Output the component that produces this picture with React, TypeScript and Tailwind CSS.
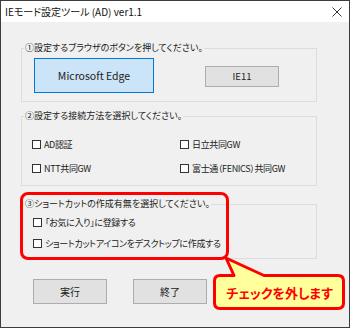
import React from "react";

const FONT = "font-['Noto_Sans_CJK_JP','Noto_Sans',sans-serif] [font-feature-settings:'palt']";

function Check({ label }: { label: string }) {
  return (
    <label className="flex h-[14px] items-center gap-[3px] text-[9px] tracking-[-0.35px] text-[#222]">
      <span className="h-[9px] w-[9px] shrink-0 border border-[#333] bg-white" />
      <span className="leading-none">{label}</span>
    </label>
  );
}

function Group({ title, className, children }: { title: string; className?: string; children: React.ReactNode }) {
  return (
    <fieldset className={`w-[296px] border border-[#dcdcdc] ${className ?? ""}`}>
      <legend className="ml-[2px] h-[14px] px-[1px] text-[9px] leading-[14px] text-[#222]">{title}</legend>
      {children}
    </fieldset>
  );
}

export default function App() {
  return (
    <div className={`relative flex h-[328px] w-[350px] flex-col border border-[#3c3c3c] bg-[#f0f0f0] ${FONT}`}>
      <div className="flex h-[21px] shrink-0 items-center justify-between bg-white pl-[4px] pr-[7px]">
        <span className="text-[10px] text-[#111]">IEモード設定ツール (AD) ver1.1</span>
        <svg width="10" height="10" viewBox="0 0 10 10">
          <path d="M0.5 0.5 L9.5 9.5 M9.5 0.5 L0.5 9.5" stroke="#333" strokeWidth="1" />
        </svg>
      </div>

      <div className="flex flex-col px-[20px] pt-[19px]">
        <Group title="①設定するブラウザのボタンを押してください。">
          <div className="flex h-[46px] items-start pl-[12px] pt-[3px]">
            <button className="flex h-[35px] w-[120px] items-center justify-center border border-[#0078d7] bg-[#cce4f7] text-[10.5px] text-[#222]">
              Microsoft Edge
            </button>
            <button className="ml-[51px] mt-[8px] flex h-[21px] w-[74px] items-center justify-center border border-[#adadad] bg-[#e1e1e1] text-[9.5px] text-[#222]">
              IE11
            </button>
          </div>
        </Group>

        <Group title="②設定する接続方法を選択してください。" className="mt-[7px]">
          <div className="grid grid-cols-[148px_1fr] gap-y-[10px] pb-[10px] pl-[10px] pt-[14px]">
            <Check label="AD認証" />
            <Check label="日立共同GW" />
            <Check label="NTT共同GW" />
            <Check label="富士通（FENICS）共同GW" />
          </div>
        </Group>

        <Group title="③ショートカットの作成有無を選択してください。" className="mt-[11px]">
          <div className="flex flex-col gap-[7px] pb-[8px] pl-[11px] pt-[4px]">
            <Check label="「お気に入り」に登録する" />
            <Check label="ショートカットアイコンをデスクトップに作成する" />
          </div>
        </Group>

        <div className="ml-[12px] mt-[20px] flex gap-[26px]">
          <button className="flex h-[25px] w-[74px] items-center justify-center border border-[#adadad] bg-[#e1e1e1] text-[10px] text-[#222]">
            実行
          </button>
          <button className="flex h-[25px] w-[74px] items-center justify-center border border-[#adadad] bg-[#e1e1e1] text-[10px] text-[#222]">
            終了
          </button>
        </div>
      </div>

      {/* annotation overlay */}
      <div className="pointer-events-none absolute left-[19px] top-[191px] h-[68px] w-[209px] rounded-[8px] border-[3px] border-[#ff0000]" />
      <svg className="pointer-events-none absolute left-[-1px] top-[-1px]" width="350" height="328">
        <path
          d="M220 275.5 L234 275.5 L226 258 L264 275.5 L338 275.5 Q343.5 275.5 343.5 281 L343.5 303 Q343.5 308.5 338 308.5 L220 308.5 Q214.5 308.5 214.5 303 L214.5 281 Q214.5 275.5 220 275.5 Z"
          fill="#ffff9c"
          stroke="#ff0000"
          strokeWidth="3"
          strokeLinejoin="round"
        />
      </svg>
      <div className="pointer-events-none absolute left-[213px] top-[274px] flex h-[35px] w-[131px] items-center justify-center text-[13px] font-bold text-[#ff0000]">
        チェックを外します
      </div>
    </div>
  );
}
